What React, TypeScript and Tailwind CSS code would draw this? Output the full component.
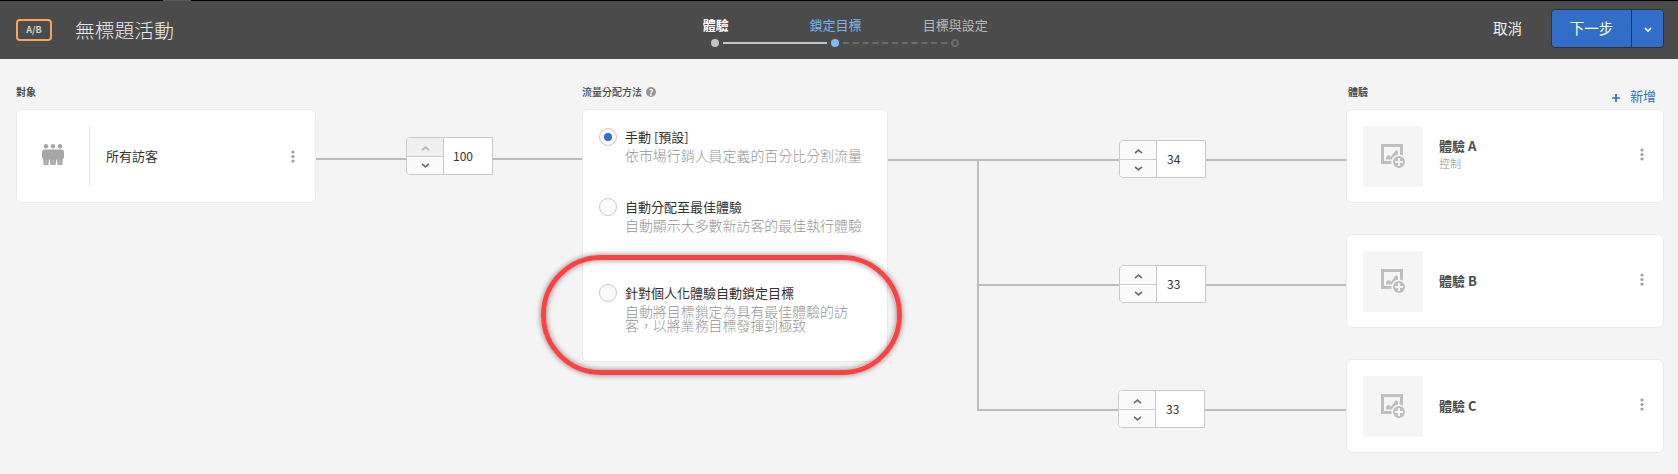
import React from "react";

const rows = [
  { id: "A", name: "體驗 A", note: "控制", value: 34 },
  { id: "B", name: "體驗 B", note: "", value: 33 },
  { id: "C", name: "體驗 C", note: "", value: 33 },
];

const methods = [
  { title: "手動 [預設]", text: "依市場行銷人員定義的百分比分割流量", checked: true, box: "h-[70px]" },
  { title: "自動分配至最佳體驗", text: "自動顯示大多數新訪客的最佳執行體驗", checked: false, box: "h-[86px]" },
  { title: "針對個人化體驗自動鎖定目標", text: "自動將目標鎖定為具有最佳體驗的訪客，以將業務目標發揮到極致", checked: false, box: "h-[60px]" },
];

function Chevron({ up, className }: { up?: boolean; className: string }) {
  return (
    <svg width="9" height="5" viewBox="0 0 9 5" fill="none" className={className}>
      <path d={up ? "M1 4.2 4.5 1.2 8 4.2" : "M1 .8 4.5 3.8 8 .8"} stroke="currentColor" strokeWidth="1.7" />
    </svg>
  );
}

function Stepper({ value, maxed }: { value: number; maxed?: boolean }) {
  return (
    <div className="flex h-[38px] w-[87px] shrink-0 overflow-hidden rounded-l-[4px] border border-[#cacaca] bg-white">
      <div className="flex w-[37px] flex-col border-r border-[#cacaca] bg-[#fafafa]">
        <div className={maxed ? "flex h-[19px] items-center justify-center border-b border-[#cacaca] bg-[#efefef]" : "flex h-[19px] items-center justify-center border-b border-[#cacaca]"}>
          <Chevron up className={maxed ? "mt-[3px] text-[#b3b3b3]" : "mt-[3px] text-[#6e6e6e]"} />
        </div>
        <div className="flex flex-1 items-center justify-center">
          <Chevron className="text-[#6e6e6e]" />
        </div>
      </div>
      <div className={maxed ? "flex flex-1 items-center pl-[9px] text-xs text-[#323232]" : "flex flex-1 items-center pl-[10px] text-xs text-[#323232]"}>{value}</div>
    </div>
  );
}

function Dots() {
  return (
    <svg width="4" height="13" viewBox="0 0 4 13" fill="#9e9e9e">
      <circle cx="2" cy="2" r="1.6" />
      <circle cx="2" cy="6.5" r="1.6" />
      <circle cx="2" cy="11" r="1.6" />
    </svg>
  );
}

function People() {
  return (
    <svg width="22" height="21" viewBox="0 0 22 21" fill="#a6a6a6" className="-mt-[3px]">
      <circle cx="4" cy="2.3" r="2.2" />
      <circle cx="11" cy="2.3" r="2.2" />
      <circle cx="18" cy="2.3" r="2.2" />
      <path d="M2.5 5.4h17Q22 5.4 22 8v5.2q0 1.3-1.3 1.6L20.4 21h-4.8l-.6-5.6h-.7L13.5 21h-5l-.8-5.6H7L6.4 21H1.6l-.3-6.2Q0 14.5 0 13.2V8q0-2.6 2.5-2.6Z" />
      <path d="M4 16v5M11 16v5M18 16v5" stroke="#fff" strokeWidth=".35" />
    </svg>
  );
}

function ImageAdd() {
  return (
    <svg width="24" height="24" viewBox="0 0 24 24" fill="none">
      <path d="M1.5 1.5h19v17h-19Z" stroke="#bfbfbf" strokeWidth="3" />
      <path d="M5 15.6v-2.6l1.8-1.8q.9-.5 1.7.3l1.5 1.3 4.2-5.9q1-1.2 2 0l.8 1v7.7Z" fill="#bfbfbf" />
      <circle cx="18" cy="18" r="7.6" fill="#f5f5f5" />
      <circle cx="18" cy="18" r="6" fill="#bfbfbf" />
      <path d="M18 14v8M14 18h8" stroke="#f5f5f5" strokeWidth="2" />
    </svg>
  );
}

function Progress() {
  return (
    <svg width="250" height="8" viewBox="0 0 250 8" fill="none" className="ml-[5px]">
      <circle cx="5" cy="4" r="4" fill="#c4c4c4" />
      <path d="M13 4h104" stroke="#c4c4c4" strokeWidth="2" />
      <circle cx="125" cy="4" r="4" fill="#82b8fa" />
      <path d="M133 4h104" stroke="#6a6a6a" strokeWidth="2" strokeDasharray="6 3.8" />
      <circle cx="245" cy="4" r="3" stroke="#6a6a6a" strokeWidth="2" />
    </svg>
  );
}

export default function App() {
  return (
    <div className="relative h-[474px] w-[1678px] overflow-hidden bg-[#f4f4f4] font-['Noto_Sans_CJK_TC',sans-serif] text-[#323232]">
      <header className="h-[59px] bg-[#4b4b4b]">
        <div className="flex h-px bg-black">
          <div className="ml-[163px] w-7 bg-[#5a5a5a]" />
        </div>
        <div className="flex h-[58px] items-start">
          <div className="mt-[18px] ml-4 flex h-[22px] w-9 items-center justify-center rounded-[4px] border-2 border-[#f9a45c] text-[9px] font-bold text-[#d6d6d6]">A/B</div>
          <h1 className="mt-[14px] ml-[23px] w-[580px] text-[19.8px] leading-[30px] font-light text-[#ececec]">無標題活動</h1>
          <div className="mt-[14px] w-[360px] text-[13px] leading-5">
            <div className="flex pl-px text-center">
              <div className="w-[120px] font-bold text-white">體驗</div>
              <div className="w-[120px] text-[#7cb2f7]">鎖定目標</div>
              <div className="w-[120px] text-[#b9b9b9]">目標與設定</div>
            </div>
            <div className="mt-[4px] pl-[50px]">
              <Progress />
            </div>
          </div>
          <button className="mt-[16px] ml-[478px] text-[14.5px] leading-[22px] text-[#f0f0f0]">取消</button>
          <div className="mt-2 ml-[29px] flex h-[39px] w-[113px] rounded-[4px] border border-[#323232] bg-[#326ec8] text-white">
            <div className="flex w-[80px] items-center justify-center border-r border-[#323232] pb-px text-[14.5px]">下一步</div>
            <div className="flex flex-1 items-center justify-center">
              <svg width="8" height="6" viewBox="0 0 8 6" fill="none" className="mt-[3px]">
                <path d="m1 1 3 3 3-3" stroke="#fff" strokeWidth="1.6" />
              </svg>
            </div>
          </div>
        </div>
      </header>

      <main className="flex pl-4">
        <section className="w-[300px]">
          <div className="h-[50px] pt-[26px] text-[10px] leading-[14px] font-bold text-[#4b4b4b]">對象</div>
          <div className="flex h-[94px] items-center rounded-[6px] border border-[#eaeaea] bg-white">
            <div className="flex h-[60px] w-[73px] items-center border-r border-[#e1e1e1] pl-[25px]">
              <People />
            </div>
            <div className="w-[186px] pl-4 text-[13px]">所有訪客</div>
            <div className="mt-px ml-[15px]">
              <Dots />
            </div>
          </div>
        </section>

        <div className="mt-[78px] flex h-[38px] w-[266px] items-center">
          <div className="mt-[6px] h-[2px] w-[90px] bg-[#bcbcbc]" />
          <Stepper value={100} maxed />
          <div className="mt-[6px] h-[2px] flex-1 bg-[#bcbcbc]" />
        </div>

        <section className="w-[306px]">
          <div className="flex h-[50px] gap-1 pt-[26px] text-[10px] leading-[14px] font-medium text-[#4b4b4b]">
            流量分配方法
            <div className="mt-[2px] flex size-[10px] items-center justify-center rounded-full bg-[#959595] text-[9px] leading-none font-bold text-white">?</div>
          </div>
          <div className="h-[253px] rounded-[6px] border border-[#eaeaea] bg-white pt-[18px] pl-4">
            {methods.map((m) => (
              <div key={m.title} className={m.box + " flex"}>
                <div className="flex size-[18px] items-center justify-center rounded-full border border-[#cacaca] bg-[#fafafa]">
                  {m.checked && <div className="size-2 rounded-full bg-[#326ec8]" />}
                </div>
                <div className="ml-[8px] w-[240px]">
                  <div className="-mt-px mb-px text-[13px] leading-5">{m.title}</div>
                  <div className="w-[238px] text-[13.95px] leading-[14px] font-light text-[#959595]">{m.text}</div>
                </div>
              </div>
            ))}
          </div>
        </section>

        <div className="flex w-[458px] pt-[50px]">
          <div className="mt-[50px] h-[2px] w-[89px] bg-[#bcbcbc]" />
          <div className="mt-[50px] h-[252px] w-[2px] bg-[#bcbcbc]" />
          <div className="flex flex-1 flex-col gap-[87px] pt-[31px]">
            {rows.map((r) => (
              <div key={r.id} className="flex h-[38px] items-center">
                <div className={r.id === "C" ? "mt-[2px] h-[2px] w-[139px] bg-[#bcbcbc]" : "mt-[2px] h-[2px] w-[140px] bg-[#bcbcbc]"} />
                <Stepper value={r.value} />
                <div className="mt-[2px] h-[2px] flex-1 bg-[#bcbcbc]" />
              </div>
            ))}
          </div>
        </div>

        <section className="w-[318px]">
          <div className="flex h-[50px] justify-between pr-[8px] pl-[2px]">
            <div className="pt-[26px] text-[10px] leading-[14px] font-bold text-[#4b4b4b]">體驗</div>
            <div className="flex items-start gap-[10px] pt-[27px] text-[13px] leading-5 text-[#326ec8]">
              <svg width="8" height="8" viewBox="0 0 8 8" className="mt-2">
                <path d="M4 0v8M0 4h8" stroke="#326ec8" strokeWidth="1.7" />
              </svg>
              新增
            </div>
          </div>
          <div className="flex flex-col gap-[31px]">
            {rows.map((r) => (
              <div key={r.id} className="flex h-[94px] items-center rounded-[6px] border border-[#eaeaea] bg-white pl-4">
                <div className="flex h-[61px] w-[60px] items-center justify-center bg-[#f5f5f5]">
                  <ImageAdd />
                </div>
                <div className={r.note ? "-mt-[4px] w-[216px] pl-[16px] text-[13px] leading-[18px]" : "w-[216px] pl-[16px] text-[13px] leading-[18px]"}>
                  <div className="font-bold text-[#4b4b4b]">{r.name}</div>
                  {r.note && <div className="text-[11px] leading-4 font-light text-[#8a8a8a]">{r.note}</div>}
                </div>
                <div className="-mt-[4px] pl-[1px]">
                  <Dots />
                </div>
              </div>
            ))}
          </div>
        </section>
      </main>

      <div className="absolute top-[255px] left-[541px] h-[120px] w-[361px] rounded-[60px] border-[5px] border-[#fc4343] shadow-[0_0_5px_1px_rgba(0,0,0,0.35),inset_0_0_5px_1px_rgba(0,0,0,0.35)]" />
    </div>
  );
}
